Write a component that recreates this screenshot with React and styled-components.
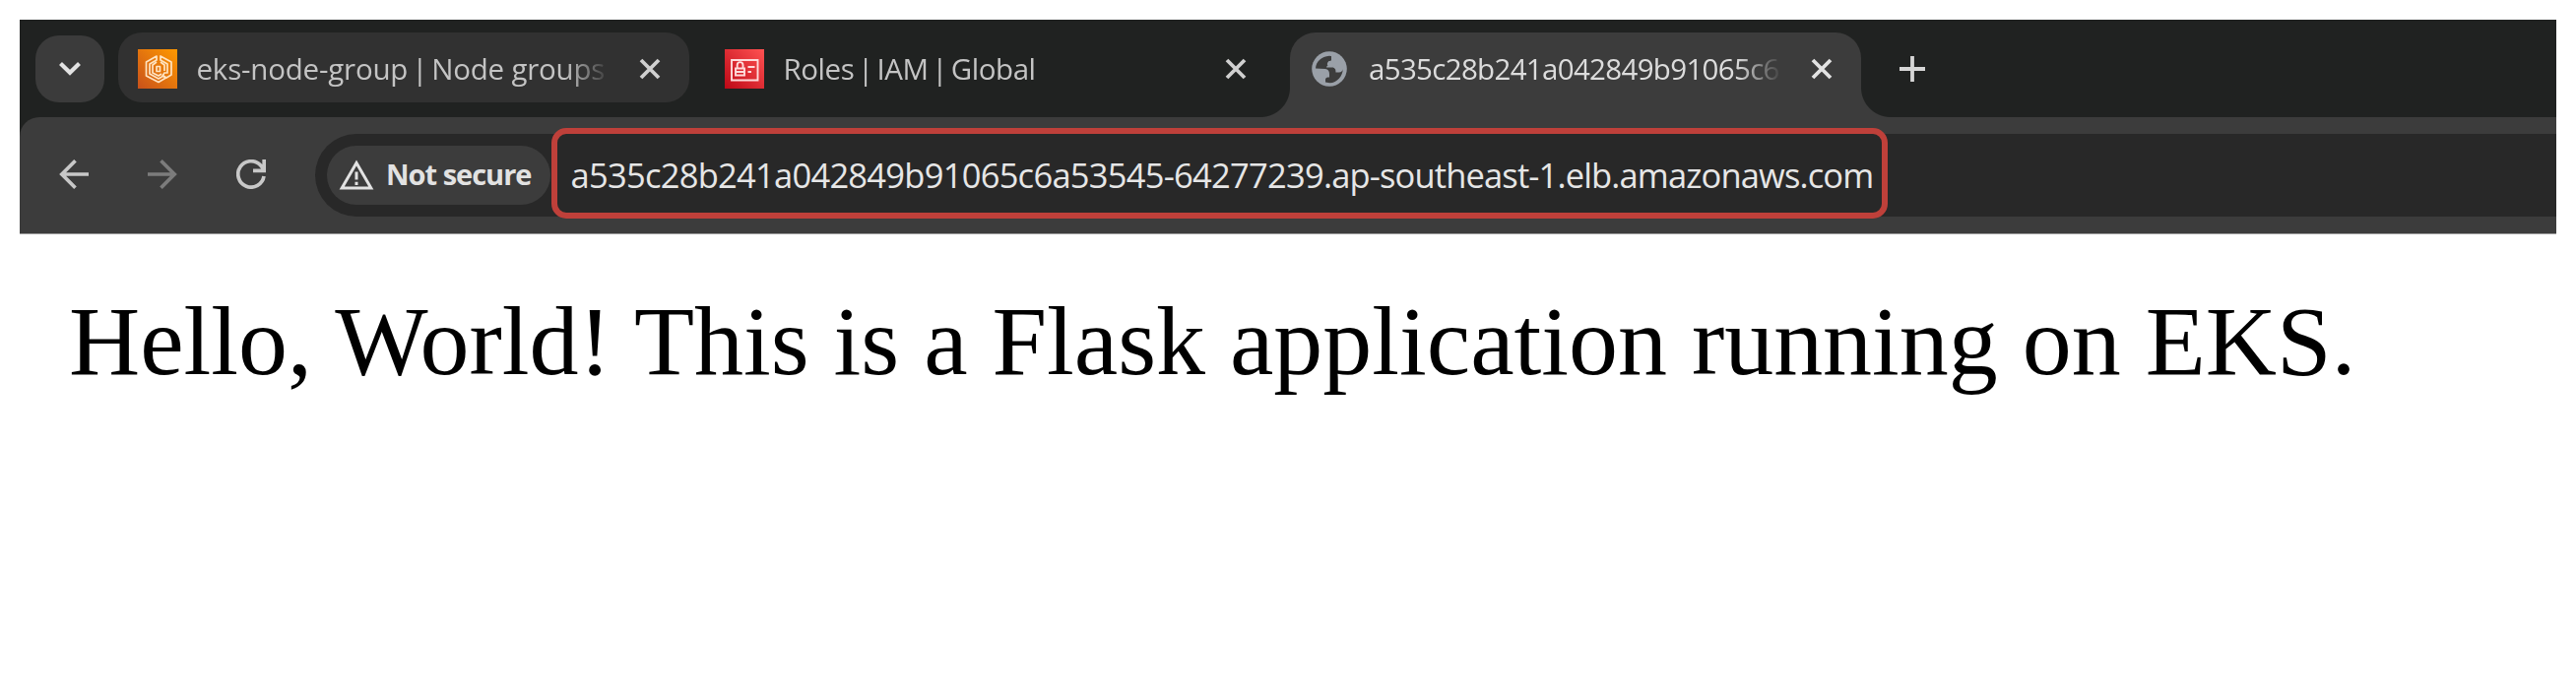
import React from 'react';
import styled, { createGlobalStyle, css } from 'styled-components';

const STRIP = '#202221';
const TOOLBAR = '#3c3c3c';

const GlobalStyle = createGlobalStyle`
  *, *::before, *::after { box-sizing: border-box; }
  body { margin: 0; background: #fff; }
  svg { display: block; flex: none; }
`;

const Screen = styled.main`
  height: 708px;
  padding: 20px;
  background: #fff;
`;

const BrowserWindow = styled.div`
  width: 2576px;
  font-family: 'Open Sans', 'Noto Sans', sans-serif;
`;

const TabStrip = styled.div`
  display: flex;
  align-items: flex-start;
  height: 99px;
  padding: 13px 0 0 16px;
  background: ${STRIP};
`;

const TabSearch = styled.button`
  display: grid;
  place-items: center;
  width: 70px;
  height: 68px;
  margin: 3px 14px 0 0;
  padding: 0;
  border: 0;
  border-radius: 24px;
  background: #3b3b3b;
`;

const flare = css`
  content: '';
  position: absolute;
  bottom: 0;
  width: 30px;
  height: 30px;
`;

const Tab = styled.div`
  display: flex;
  align-items: center;
  width: ${(p) => p.$width || 580}px;
  height: 71px;
  margin-right: ${(p) => p.$gap || 0}px;
  padding: 2px 29px 0 20px;
  border-radius: 24px;
  background: ${(p) => (p.$hovered ? '#313131' : 'transparent')};
  color: #c4c4c4;

  ${(p) =>
    p.$active &&
    css`
      position: relative;
      height: 86px;
      padding: 0 29px 13px 22px;
      border-radius: 26px 26px 0 0;
      background: ${TOOLBAR};
      color: #dcdcdc;

      &::before {
        ${flare}
        left: -30px;
        background: radial-gradient(circle at 0 0, transparent 29.5px, ${TOOLBAR} 30.5px);
      }
      &::after {
        ${flare}
        right: -30px;
        background: radial-gradient(circle at 100% 0, transparent 29.5px, ${TOOLBAR} 30.5px);
      }
    `}
`;

const TabTitle = styled.span`
  width: 420px;
  margin-left: ${(p) => p.$offset || 19.5}px;
  padding-top: 1px;
  white-space: pre;
  font-size: 29.5px;
  line-height: 42px;
  letter-spacing: ${(p) => p.$tracking}px;
  mask-image: linear-gradient(90deg, #000 calc(100% - 46px), transparent 100%);
`;

const Bar = styled.span`
  margin: 0 -3.5px;
`;

const CloseIcon = styled.svg`
  width: 22px;
  height: 22px;
  margin-left: auto;
  stroke: ${(p) => (p.$bright ? '#e2e2e2' : '#d0d0d0')};
  stroke-width: 3.8;
`;

const NewTab = styled.button`
  display: grid;
  place-items: center;
  width: 72px;
  height: 72px;
  margin: 1px 0 0 16px;
  padding: 0;
  border: 0;
  background: transparent;
`;

const ToolbarBack = styled.div`
  background: ${STRIP};
`;

const Toolbar = styled.div`
  position: relative;
  display: flex;
  align-items: flex-start;
  height: 119px;
  padding: 17px 0 0 40px;
  border-bottom: 1px solid #999;
  border-radius: 20px 0 0 0;
  background: ${TOOLBAR};
`;

const NavButtons = styled.div`
  display: flex;
  align-items: center;
  gap: 60px;
  width: 260px;
  height: 82px;
`;

const AddressBar = styled.div`
  display: flex;
  align-items: center;
  flex: 1;
  height: 84px;
  padding-left: 12px;
  border-radius: 42px 0 0 42px;
  background: #282828;
`;

const SecurityChip = styled.div`
  display: flex;
  align-items: center;
  gap: 12px;
  width: 227px;
  height: 60px;
  padding-left: 12px;
  border-radius: 30px;
  background: #3c3c3c;
`;

const ChipLabel = styled.span`
  padding-bottom: 2px;
  color: #e2e2e2;
  font-size: 29px;
  font-weight: 700;
  line-height: 42px;
  letter-spacing: -1px;
  white-space: nowrap;
`;

const Url = styled.span`
  margin-left: 20.5px;
  color: #e6e6e6;
  font-size: 34.5px;
  line-height: 48px;
  white-space: nowrap;
`;

const Host = styled.span`
  letter-spacing: ${(p) => p.$tracking}px;
`;

const Highlight = styled.div`
  position: absolute;
  left: 539.5px;
  top: 11px;
  width: 1357px;
  height: 92px;
  border: 6.5px solid #bf403a;
  border-radius: 15px;
`;

const Page = styled.p`
  margin: 0;
  padding: 51px 0 0 50px;
  color: #000;
  font: 100px/115px 'Liberation Serif', 'Times New Roman', serif;
  letter-spacing: -0.03px;
  white-space: nowrap;
`;

const Close = ({ bright }) => (
  <CloseIcon $bright={bright} viewBox="0 0 22 22">
    <path d="M2 2l18 18M20 2L2 20" />
  </CloseIcon>
);

const EksIcon = () => (
  <svg width="40" height="40" viewBox="0 0 40 40" fill="none">
    <defs>
      <linearGradient id="eks" x1="0" y1="1" x2="1" y2="0">
        <stop offset="0" stopColor="#c8511b" />
        <stop offset="1" stopColor="#ff9900" />
      </linearGradient>
    </defs>
    <path fill="url(#eks)" d="M0 0h40v40H0z" />
    <g stroke="#ffe3c0" strokeWidth="1.7" strokeLinejoin="round">
      <path d="M19 7L8.500 13v14L21 33.500l7.500-4.500-2.500-2-5 3-9-5V15l7-4z" />
      <path d="M23 7v4l7 4v9h-3l-2 3 4 2 5-3V13z" />
      <path d="M19 13l-4 3v8l6 3 3-2M23 13l4 3v6" />
      <path d="M19 17.500h3.500v5H19z" />
    </g>
  </svg>
);

const IamIcon = () => (
  <svg width="40" height="40" viewBox="0 0 40 40" fill="none">
    <defs>
      <linearGradient id="iam" x1="0" y1="1" x2="1" y2="0">
        <stop offset="0" stopColor="#bd0816" />
        <stop offset="1" stopColor="#ff5252" />
      </linearGradient>
    </defs>
    <path fill="url(#iam)" d="M0 0h40v40H0z" />
    <g stroke="#ffdada" strokeWidth="1.9">
      <path d="M7 11h26.500v20.500H7z" />
      <path d="M11 19.500h9v7h-9zM12.700 19.500v-3.500a2.900 2.900 0 0 1 5.800 0v3.500M11 23h9" />
      <path d="M23.500 18h7M23.500 23h3.500" />
    </g>
  </svg>
);

const GlobeIcon = () => (
  <svg width="36" height="36" viewBox="0 0 36 36">
    <circle cx="18" cy="18" r="17.800" fill="#9aa0a8" />
    <path
      fill="#3c3c3c"
      d="M4 17C4.500 10 10 5 18 4.300l3 .5v2c0 2.200-1.600 3.200-4 3.200v2.500c0 1.800-2 2-2 3.500h5.500c3.500 0 4 2 4 5h3.500c2 0 3.500-1.500 3.800-3.500C31.500 25 26 31.500 18.500 31.800L14 31v-2.500c0-1.500 1-2.500 2.500-2.500H18v-3.500c0-3-1.500-4.500-4-5z"
      transform="translate(0 .4)"
    />
    <path
      fill="#9aa0a8"
      d="M20 4.500c5 .5 11.500 6 12 13-2 2-4.500 1.500-6 0-1.500 1-4.500-.5-4.500-3.500h-5.500c-.5-3 1.500-4 4-4.500z"
    />
  </svg>
);

export default function App() {
  return (
    <Screen>
      <GlobalStyle />
      <BrowserWindow>
        <TabStrip>
          <TabSearch aria-label="Search tabs">
            <svg width="24" height="16" viewBox="0 0 24 16" fill="none" stroke="#e2e2e2" strokeWidth="4.2">
              <path d="M2.500 2.500L12 11.800l9.500-9.300" />
            </svg>
          </TabSearch>
          <Tab $hovered $gap={16}>
            <EksIcon />
            <TabTitle $tracking={-0.2}>
              eks-node-group <Bar>|</Bar> Node groups
            </TabTitle>
            <Close />
          </Tab>
          <Tab $width={579} $gap={15}>
            <IamIcon />
            <TabTitle $tracking={-0.45}>
              Roles <Bar>|</Bar> IAM <Bar>|</Bar> Global
            </TabTitle>
            <Close />
          </Tab>
          <Tab $active>
            <GlobeIcon />
            <TabTitle $tracking={-0.68} $offset={22}>a535c28b241a042849b91065c6</TabTitle>
            <Close bright />
          </Tab>
          <NewTab aria-label="New tab">
            <svg width="26" height="26" viewBox="0 0 26 26" stroke="#d6d6d6" strokeWidth="3.8">
              <path d="M13 0v26M0 13h26" />
            </svg>
          </NewTab>
        </TabStrip>
        <ToolbarBack>
          <Toolbar>
            <NavButtons>
              <svg width="30" height="30" viewBox="0 0 30 30" fill="none" stroke="#c8c8c8" strokeWidth="3.7">
                <path d="M30 15H3M16.500 1.300L2.800 15l13.700 13.700" />
              </svg>
              <svg width="30" height="30" viewBox="0 0 30 30" fill="none" stroke="#7c7c7c" strokeWidth="3.700">
                <path d="M0 15h27M13.500 1.300L27.200 15 13.500 28.700" />
              </svg>
              <svg width="30" height="30" viewBox="0 0 30 30" fill="none" stroke="#c8c8c8" strokeWidth="3.700">
                <path d="M28 17A13.200 13.200 0 1 1 24.500 5.800L28 10M28.200 0v11.300H17" />
              </svg>
            </NavButtons>
            <AddressBar>
              <SecurityChip>
                <svg width="36" height="32" viewBox="0 0 36 32" fill="none" stroke="#e2e2e2" strokeWidth="3">
                  <path d="M18 3.500L3.200 29h29.600z" />
                  <path d="M18 12.500v8M18 22.700v3.300" />
                </svg>
                <ChipLabel>Not secure</ChipLabel>
              </SecurityChip>
              <Url>
                <Host $tracking={-0.74}>a535c28b241a042849b91065c6a53545-64277239</Host>
                <Host $tracking={-0.86}>.ap-southeast-1.elb.amazonaws.com</Host>
              </Url>
            </AddressBar>
            <Highlight />
          </Toolbar>
        </ToolbarBack>
        <Page>Hello, World! This is a Flask application running on EKS.</Page>
      </BrowserWindow>
    </Screen>
  );
}
